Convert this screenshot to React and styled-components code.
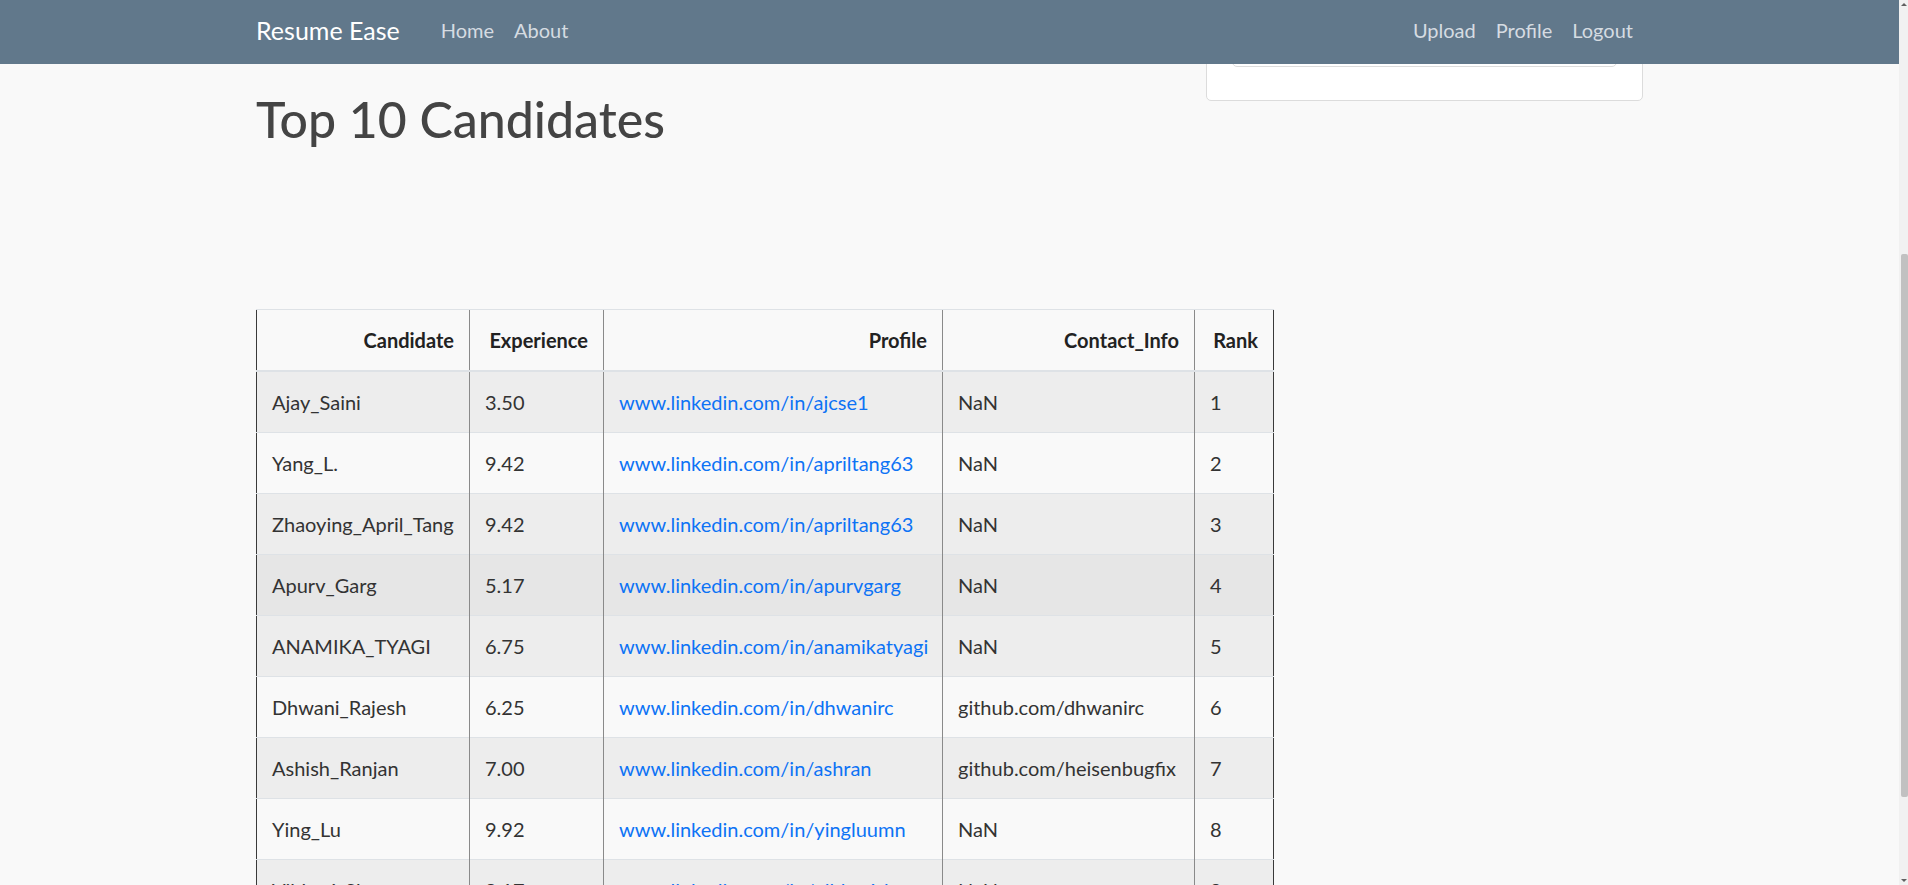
import React, { useLayoutEffect, useRef } from "react";
import styled, { createGlobalStyle } from "styled-components";

const candidates = [
  { name: "Ajay_Saini", exp: "3.50", profile: "www.linkedin.com/in/ajcse1", contact: "NaN" },
  { name: "Yang_L.", exp: "9.42", profile: "www.linkedin.com/in/apriltang63", contact: "NaN" },
  { name: "Zhaoying_April_Tang", exp: "9.42", profile: "www.linkedin.com/in/apriltang63", contact: "NaN" },
  { name: "Apurv_Garg", exp: "5.17", profile: "www.linkedin.com/in/apurvgarg", contact: "NaN" },
  { name: "ANAMIKA_TYAGI", exp: "6.75", profile: "www.linkedin.com/in/anamikatyagi", contact: "NaN" },
  { name: "Dhwani_Rajesh", exp: "6.25", profile: "www.linkedin.com/in/dhwanirc", contact: "github.com/dhwanirc" },
  { name: "Ashish_Ranjan", exp: "7.00", profile: "www.linkedin.com/in/ashran", contact: "github.com/heisenbugfix" },
  { name: "Ying_Lu", exp: "9.92", profile: "www.linkedin.com/in/yingluumn", contact: "NaN" },
  { name: "Vibhuti_Sharma", exp: "8.17", profile: "www.linkedin.com/in/vibhutisharma", contact: "NaN" },
];

const columns = [
  { title: "Candidate", width: 213 },
  { title: "Experience", width: 134 },
  { title: "Profile", width: 339 },
  { title: "Contact_Info", width: 252 },
  { title: "Rank", width: 79 },
];

const App = () => {
  const viewRef = useRef(null);
  const cardRef = useRef(null);

  // page is shown scrolled so that only the bottom of the upload card peeks out
  useLayoutEffect(() => {
    const view = viewRef.current;
    const card = cardRef.current;
    if (!view || !card) return;
    const viewTop = view.getBoundingClientRect().top;
    const cardBottom = card.getBoundingClientRect().bottom;
    view.scrollTop = cardBottom - viewTop - 37;
  }, []);

  return (
    <Shell>
      <GlobalStyle />
      <Main>
        <NavBar>
          <NavInner>
            <Brand>Resume Ease</Brand>
            <NavGroup>
              <NavLink>Home</NavLink>
              <NavLink>About</NavLink>
            </NavGroup>
            <NavGroup $right>
              <NavLink>Upload</NavLink>
              <NavLink>Profile</NavLink>
              <NavLink>Logout</NavLink>
            </NavGroup>
          </NavInner>
        </NavBar>
        <Viewport ref={viewRef}>
          <Container>
            <CardRow>
              <Card ref={cardRef}>
                <DropBox />
              </Card>
            </CardRow>
            <Heading>Top 10 Candidates</Heading>
            <Table>
              <colgroup>
                {columns.map((c) => (
                  <col key={c.title} style={{ width: c.width }} />
                ))}
              </colgroup>
              <thead>
                <tr>
                  {columns.map((c) => (
                    <Th key={c.title}>{c.title}</Th>
                  ))}
                </tr>
              </thead>
              <tbody>
                {candidates.map((c, i) => (
                  <Row key={c.name} $striped={i % 2 === 0} $hover={i === 3}>
                    <Td>{c.name}</Td>
                    <Td>{c.exp}</Td>
                    <Td>
                      <ProfileLink href="#">{c.profile}</ProfileLink>
                    </Td>
                    <Td>{c.contact}</Td>
                    <Td>{i + 1}</Td>
                  </Row>
                ))}
              </tbody>
            </Table>
          </Container>
        </Viewport>
      </Main>
      <ScrollRail>
        <RailArrow $up />
        <RailTrack>
          <Thumb />
        </RailTrack>
        <RailArrow />
      </ScrollRail>
    </Shell>
  );
};

const GlobalStyle = createGlobalStyle`
  html, body {
    margin: 0;
    padding: 0;
    height: 100%;
    overflow: hidden;
  }
  body {
    font-family: Lato, "Open Sans", "Noto Sans", sans-serif;
    background: #f9f9f9;
    color: #333;
  }
`;

const Shell = styled.div`
  display: flex;
  height: 100vh;
  background: #f9f9f9;
`;

const Main = styled.div`
  flex: 1;
  display: flex;
  flex-direction: column;
  min-width: 0;
`;

const NavBar = styled.nav`
  flex-shrink: 0;
  height: 64px;
  background: #61788b;
  position: relative;
  z-index: 1;
`;

const NavInner = styled.div`
  max-width: 1425px;
  height: 100%;
  margin: 0 auto;
  padding: 0 19px 4px 19px;
  box-sizing: border-box;
  display: flex;
  align-items: center;
`;

const Brand = styled.a`
  color: #fff;
  font-size: 25px;
  margin-right: 31px;
`;

const NavGroup = styled.div`
  display: flex;
  margin-left: ${(p) => (p.$right ? "auto" : "0")};
`;

const NavLink = styled.a`
  color: #d6dce2;
  font-size: 20px;
  padding: 0 10px;
`;

const Viewport = styled.div`
  flex: 1;
  overflow: hidden;
`;

const Container = styled.div`
  max-width: 1425px;
  margin: 0 auto;
  padding: 0 19px 60px;
  box-sizing: border-box;
`;

const CardRow = styled.div`
  display: flex;
  justify-content: flex-end;
  padding-top: 30px;
`;

const Card = styled.div`
  width: 437px;
  box-sizing: border-box;
  background: #fff;
  border: 1px solid #dcdcdc;
  border-radius: 5px;
  padding: 25px 25px 33px;
`;

const DropBox = styled.div`
  height: 140px;
  border: 1px solid #dcdcdc;
  border-radius: 5px;
`;

const Heading = styled.h1`
  margin: -12px 0 0;
  font-size: 50px;
  line-height: 1.2;
  font-weight: 500;
  color: #444;
`;

const Table = styled.table`
  margin-top: 160px;
  border-collapse: collapse;
  table-layout: fixed;
  width: 1017px;
  font-size: 20px;
  line-height: 30px;
  border-left: 1px solid #3a3a3a;
  border-right: 1px solid #3a3a3a;
`;

const Th = styled.th`
  padding: 15px;
  text-align: right;
  font-weight: 700;
  color: #222;
  white-space: nowrap;
  border-top: 1px solid #dee2e6;
  border-bottom: 2px solid #dee2e6;
  border-left: 1px solid #8a8a8a;

  &:first-child {
    border-left: none;
  }
`;

const Row = styled.tr`
  background: ${(p) => (p.$hover ? "#e6e6e6" : p.$striped ? "#ededed" : "#f9f9f9")};
`;

const Td = styled.td`
  padding: 15px;
  white-space: nowrap;
  overflow: hidden;
  border-top: 1px solid #dee2e6;
  border-left: 1px solid #8a8a8a;

  &:first-child {
    border-left: none;
  }
`;

const ProfileLink = styled.a`
  color: #0d73f5;
  text-decoration: none;
`;

const ScrollRail = styled.div`
  width: 9px;
  flex-shrink: 0;
  display: flex;
  flex-direction: column;
  background: #f1f1f1;
`;

const RailTrack = styled.div`
  flex: 1;
  display: flex;
  flex-direction: column;
  padding: 245px 0 79px 2px;
`;

const Thumb = styled.div`
  flex: 1;
  background: #c1c1c1;
  border-radius: 2px;
`;

const RailArrow = styled.div`
  height: 9px;
  display: flex;
  align-items: center;
  justify-content: center;

  &::before {
    content: "";
    border-left: 3px solid transparent;
    border-right: 3px solid transparent;
    ${(p) =>
      p.$up ? "border-bottom: 3px solid #606060;" : "border-top: 3px solid #606060;"}
  }
`;

export default App;
